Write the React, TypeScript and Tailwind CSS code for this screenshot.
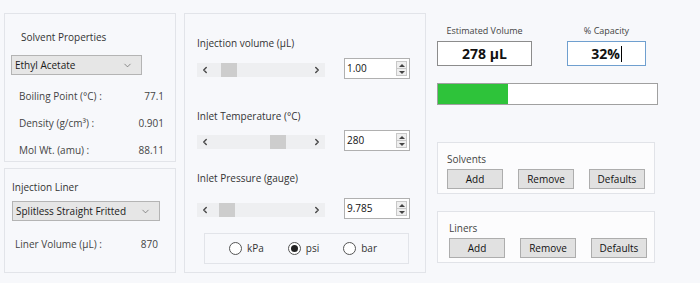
import { ChevronDown, ChevronLeft, ChevronRight } from 'lucide-react'

const font = { fontFamily: '"Open Sans", "Liberation Sans", sans-serif' }

function Combo({ label, width }: { label: string; width: string }) {
  return (
    <div
      className={`flex h-[20px] items-center justify-between border border-[#b4b4b4] bg-[#e6e6e6] pl-[3px] pr-[8px] text-[10px] text-[#1a1a1a] ${width}`}
    >
      <span>{label}</span>
      <ChevronDown className="h-[11px] w-[11px] text-[#606060]" strokeWidth={1.5} />
    </div>
  )
}

function Spin({ value }: { value: string }) {
  return (
    <div className="flex h-[21px] w-[66px] items-stretch border border-[#b0b0b0] bg-white">
      <span className="flex flex-1 items-center pl-[2px] text-[10px] text-[#111]">{value}</span>
      <div className="my-[2px] mr-[2px] flex w-[11px] flex-col border border-[#c8c8c8] bg-[#efefef]">
        <div className="flex flex-1 items-center justify-center">
          <div className="h-0 w-0 border-x-[3px] border-b-[3px] border-x-transparent border-b-[#444]" />
        </div>
        <div className="h-px bg-[#c8c8c8]" />
        <div className="flex flex-1 items-center justify-center">
          <div className="h-0 w-0 border-x-[3px] border-t-[3px] border-x-transparent border-t-[#444]" />
        </div>
      </div>
    </div>
  )
}

function Scroll({ thumb }: { thumb: string }) {
  return (
    <div className="flex h-[14px] w-[128px] items-center bg-[#eeeff1] text-[#4a4a4a]">
      <div className="flex w-[16px] justify-center">
        <ChevronLeft className="h-[10px] w-[10px]" strokeWidth={3.5} />
      </div>
      <div className="relative h-full flex-1">
        <div className={`absolute top-0 h-full w-[16px] bg-[#cdcdcd] ${thumb}`} />
      </div>
      <div className="flex w-[16px] justify-center">
        <ChevronRight className="h-[10px] w-[10px]" strokeWidth={3.5} />
      </div>
    </div>
  )
}

function SliderRow({ label, value, thumb, mt, gap }: { label: string; value: string; thumb: string; mt: string; gap: string }) {
  return (
    <div className={mt}>
      <div className="h-[14px] text-[10px] leading-[14px] text-[#333]">{label}</div>
      <div className={`flex items-center ${gap}`}>
        <div className="mt-[3px]">
          <Scroll thumb={thumb} />
        </div>
        <div className="ml-[19px]">
          <Spin value={value} />
        </div>
      </div>
    </div>
  )
}

function Radio({ label, checked }: { label: string; checked?: boolean }) {
  return (
    <div className="flex items-center gap-[5px] text-[10px] text-[#333]">
      <div className="flex h-[13px] w-[13px] items-center justify-center rounded-full border border-[#555] bg-white">
        {checked && <div className="h-[7px] w-[7px] rounded-full bg-[#222]" />}
      </div>
      <span>{label}</span>
    </div>
  )
}

function Btn({ label }: { label: string }) {
  return (
    <div className="flex h-[20px] w-[56px] items-center justify-center border border-[#adadad] bg-[#e1e1e1] text-[10px] text-[#111]">
      {label}
    </div>
  )
}

function ButtonGroup({ title, pl }: { title: string; pl: string }) {
  return (
    <div className={`flex h-[52px] w-[218px] flex-col border border-[#e1e3e8] bg-white/60 pt-[10px] ${pl}`}>
      <div className="text-[10px] leading-[12px] text-[#444]">{title}</div>
      <div className="mt-[4px] flex gap-[15px]">
        <Btn label="Add" />
        <Btn label="Remove" />
        <Btn label="Defaults" />
      </div>
    </div>
  )
}

export default function App() {
  return (
    <div className="flex h-[283px] w-[700px] bg-[#f7f8fb] pl-[4px] pt-[13px]" style={font}>
      {/* left column */}
      <div className="flex w-[172px] flex-col gap-[6px]">
        <div className="flex h-[149px] flex-col border border-[#e2e4e9] pl-[6px] pt-[16px]">
          <div className="h-[14px] pl-[10px] text-[10px] leading-[14px] text-[#333]">Solvent Properties</div>
          <div className="mt-[11px]">
            <Combo label="Ethyl Acetate" width="w-[131px]" />
          </div>
          <div className="mt-[14px] flex flex-col gap-[13px] pl-[8px] pr-[11px] text-[10px] leading-[14px] text-[#444]">
            <div className="flex justify-between"><span>Boiling Point (°C) :</span><span>77.1</span></div>
            <div className="flex justify-between"><span>Density (g/cm³) :</span><span>0.901</span></div>
            <div className="flex justify-between"><span>Mol Wt. (amu) :</span><span>88.11</span></div>
          </div>
        </div>
        <div className="flex h-[105px] flex-col border border-[#e2e4e9] pl-[7px] pt-[11px]">
          <div className="text-[10px] text-[#333]">Injection Liner</div>
          <div className="mt-[6px]">
            <Combo label="Splitless Straight Fritted" width="w-[148px]" />
          </div>
          <div className="mt-[16px] flex justify-between pl-[3px] pr-[17px] text-[10px] text-[#444]">
            <span>Liner Volume (µL) :</span>
            <span>870</span>
          </div>
        </div>
      </div>

      {/* middle panel */}
      <div className="ml-[8px] flex h-[260px] w-[242px] flex-col border border-[#e2e4e9] pl-[12px] pt-[22px]">
        <SliderRow label="Injection volume (µL)" value="1.00" thumb="left-[8px]" mt="" gap="mt-[8px]" />
        <SliderRow label="Inlet Temperature (°C)" value="280" thumb="left-[57px]" mt="mt-[30px]" gap="mt-[7px]" />
        <SliderRow label="Inlet Pressure (gauge)" value="9.785" thumb="left-[6px]" mt="mt-[20px]" gap="mt-[13px]" />
        <div className="ml-[7px] mt-[14px] flex h-[31px] w-[205px] items-center gap-[24px] border border-[#e2e4e9] pl-[24px]">
          <Radio label="kPa" />
          <Radio label="psi" checked />
          <Radio label="bar" />
        </div>
      </div>

      {/* right column */}
      <div className="ml-[11px] flex flex-col pt-[12px]">
        <div className="flex">
          <div className="flex w-[95px] flex-col items-center">
            <span className="text-[9px] leading-[12px] text-[#444]">Estimated Volume</span>
            <div className="mt-[4px] flex h-[25px] w-[95px] items-center justify-center border border-[#8c8c8c] bg-white text-[14px] font-bold text-[#111]">
              278 µL
            </div>
          </div>
          <div className="ml-[35px] flex w-[79px] flex-col items-center">
            <span className="text-[9px] leading-[12px] text-[#444]">% Capacity</span>
            <div className="mt-[4px] flex h-[25px] w-[79px] items-center justify-center border border-[#6f9fcf] bg-white text-[14px] font-bold text-[#111]">
              32%<span className="ml-px h-[16px] w-px bg-black" />
            </div>
          </div>
        </div>
        <div className="mt-[17px] flex h-[22px] w-[221px] border border-[#a0a0a0] bg-white">
          <div className="h-full w-[70px] bg-[#2ec33a]" />
        </div>
        <div className="mt-[37px]">
          <ButtonGroup title="Solvents" pl="pl-[9px]" />
        </div>
        <div className="mt-[17px]">
          <ButtonGroup title="Liners" pl="pl-[11px]" />
        </div>
      </div>
    </div>
  )
}
